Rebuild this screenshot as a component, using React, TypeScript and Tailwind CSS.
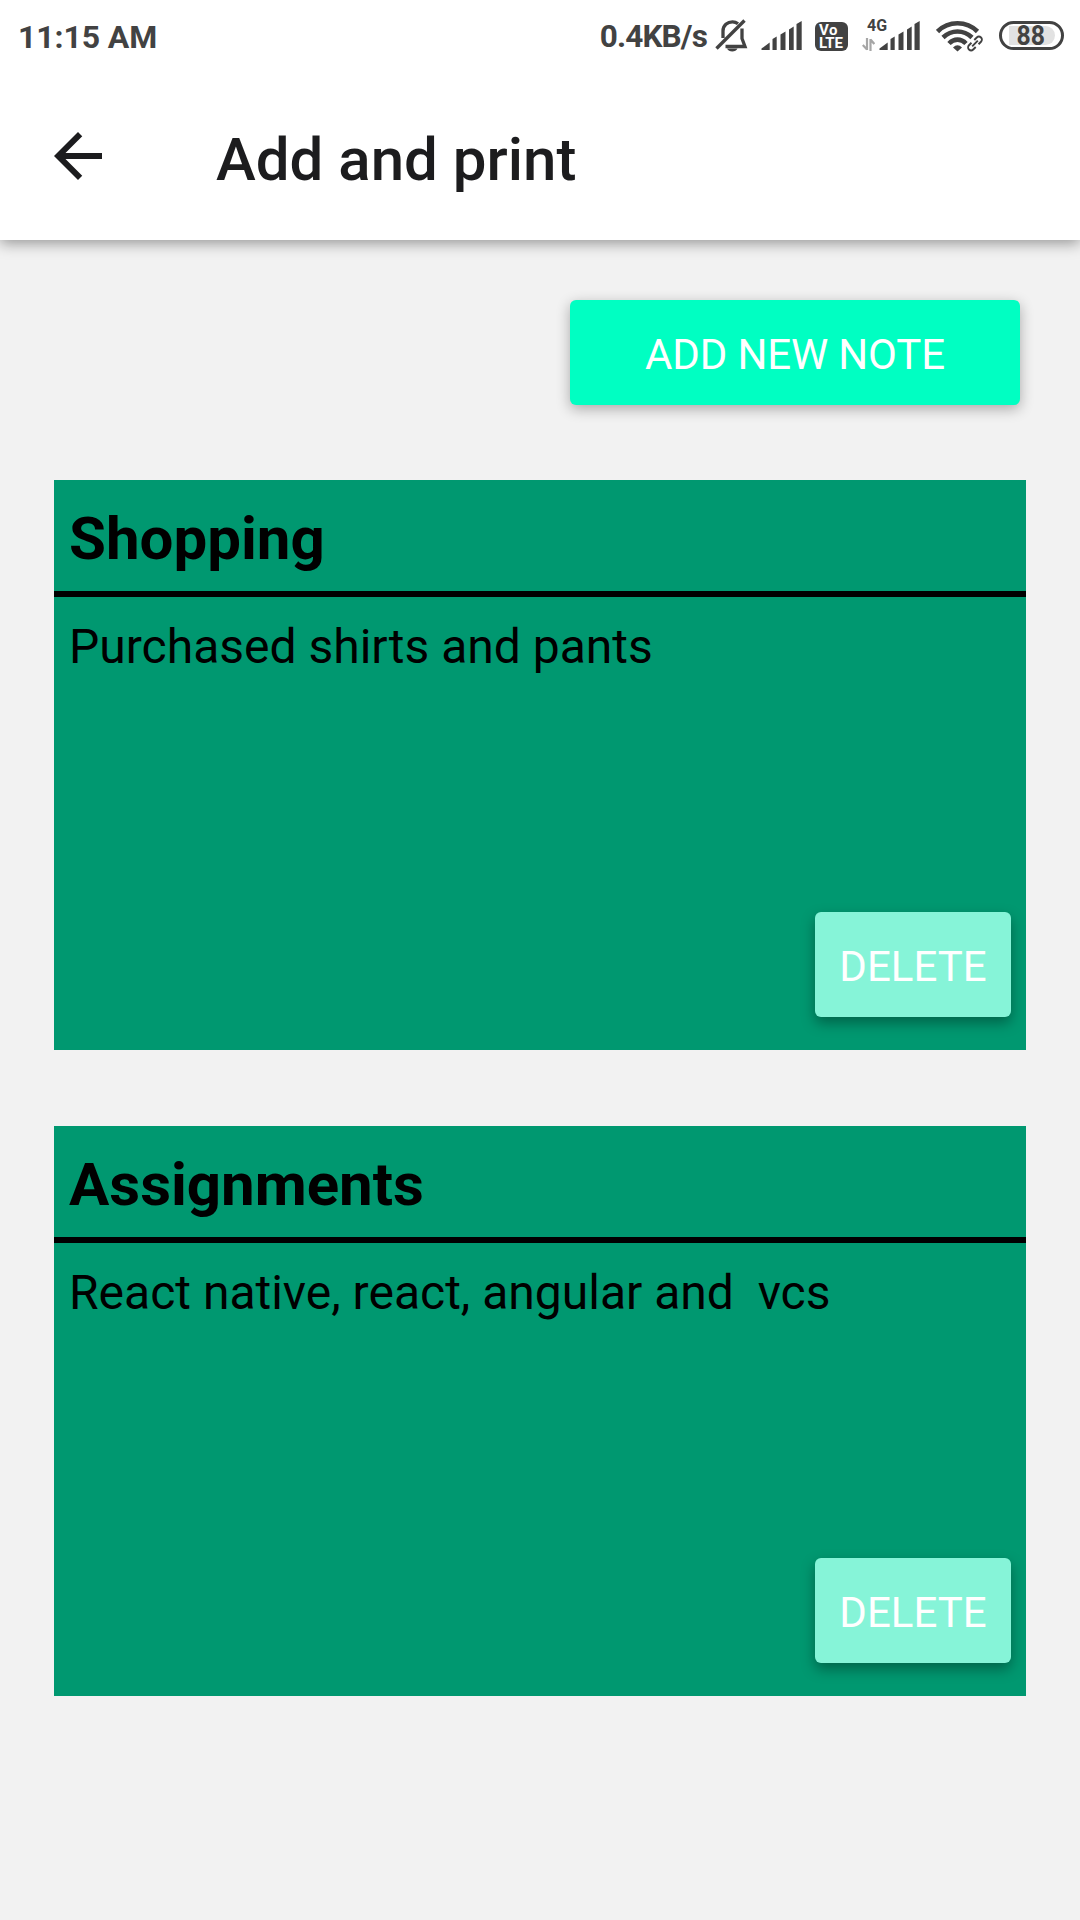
const ink = "#424242";

function SignalBars() {
  return (
    <svg width="41" height="30" viewBox="0 0 41 30" fill={ink}>
      <path d="M0.5 29V27.5L8.7 21.5V29Z" />
      <path d="M11.500 29V18L15.700 15.500V29Z" />
      <path d="M19.500 29V13.500L24.500 10.500V29Z" />
      <path d="M28 29V8.500L32.700 5.500V29Z" />
      <path d="M35.500 29V3L40.700 0V29Z" />
    </svg>
  );
}

function StatusBar() {
  return (
    <div className="flex h-[72px] items-start justify-between pr-4 pl-[18px] text-[#424242]">
      <span className="mt-[18px] text-[32px] leading-[38px] font-bold tracking-[-0.1px]">11:15 AM</span>
      <div className="flex items-start">
        <span className="mt-[18px] mr-[8px] text-[31.5px] leading-[37px] font-bold tracking-[-0.85px]">0.4KB/s</span>
        <svg className="mt-[18px] mr-[13px]" width="33" height="36" viewBox="0 0 33 36" fill="none" stroke={ink}>
          <path d="M1.500 30.500L29.500 2.500" strokeWidth="3.300" />
          <path d="M8 20V13C8 7.500 12.500 3.800 17.500 3.800C19.500 3.800 21.500 4.500 23 5.700" strokeWidth="3.300" />
          <path d="M27 10.500V20.500L30 28.500H10.500" strokeWidth="3.300" />
          <path d="M12 30.500H22.500C21 34.500 13.500 34.500 12 30.500Z" fill={ink} stroke="none" />
        </svg>
        <div className="mt-[21px] mr-[13px]"><SignalBars /></div>
        <div className="mt-[22px] mr-[14px] flex h-[29px] w-[33px] flex-col items-start justify-center rounded-[6px] bg-[#424242] pl-[4px] text-[15px] leading-[13px] font-bold text-white">
          <span className="tracking-[0.6px]">Vo</span>
          <span className="tracking-[-0.1px]">LTE</span>
        </div>
        <div className="relative mt-[21px] mr-[16px] pl-[17px]">
          <SignalBars />
          <span className="absolute top-[-5px] left-[5px] text-[16px] leading-[19px] font-bold">4G</span>
          <svg className="absolute top-[17px] left-0" width="13" height="13" viewBox="0 0 13 13" fill="none" stroke="#a6a6a6" strokeWidth="2.200">
            <path d="M5 0V12M5 11.500L0.800 7M8.500 13V1M8.500 1.500L12.300 6" />
          </svg>
        </div>
        <svg className="mt-[20px] mr-[16px]" width="47" height="32" viewBox="0 0 47 32" fill="none" stroke={ink} strokeWidth="4.600">
          <path d="M1.500 11.500C12.500 0.500 30.500 0.500 41.500 11.500" />
          <path d="M7 17.500C15.500 9.500 27.500 9.500 36 17.500" />
          <path d="M13 23.500C18 18.300 25 18.300 30 23.500" />
          <path d="M17 27.500Q21.500 23 26 27.500L21.500 31.500Z" fill={ink} stroke="none" />
          <g transform="translate(39 23.500) rotate(-45)">
            <rect x="-10.500" y="-5.500" width="21" height="11" rx="5.500" fill="#fff" stroke="none" />
            <path d="M-2 3H-5.500A3 3 0 0 1 -5.500 -3H-2M2 -3H5.500A3 3 0 0 1 5.500 3H2M-4 0H4" strokeWidth="1.900" />
          </g>
        </svg>
        <div className="mt-[21px] flex h-[29px] w-[65px] items-center justify-center rounded-full border-[3px] border-[#424242]">
          <div className="flex h-[19px] w-[46px] items-center justify-center rounded-l-[2px] rounded-r-full bg-[#e2e2e2]">
            <span className="-ml-[1px] scale-x-90 text-[27.5px] leading-[19px] font-bold">88</span>
          </div>
        </div>
      </div>
    </div>
  );
}

function Note({ title, body }: { title: string; body: string }) {
  return (
    <section className="flex h-[570px] flex-col bg-[#009870] text-black">
      <h2 className="h-[117px] border-b-[6px] border-black pt-[6px] pl-[15px] text-[60px] leading-[105px] font-bold">{title}</h2>
      <p className="pt-5 pl-[15px] text-[48px] leading-[60px] whitespace-pre">{body}</p>
      <button className="mt-auto mr-[15px] mb-[33px] h-[105px] w-[196px] self-end rounded-[6px] bg-[#86f4d8] pt-[4px] text-[42px] leading-[50px] text-white shadow-[0_6px_14px_rgba(0,0,0,0.35)]">
        DELETE
      </button>
    </section>
  );
}

export default function App() {
  return (
    <div className="min-h-[1920px] w-[1080px] bg-[#f2f2f2] font-['Roboto',sans-serif]">
      <header className="h-[240px] bg-white shadow-[0_3px_14px_rgba(0,0,0,0.4)]">
        <StatusBar />
        <div className="flex h-[168px] items-center pl-[42px]">
          <svg width="72" height="72" viewBox="0 0 24 24" fill="#1c1c1e">
            <path d="M20 11H7.830l5.590-5.590L12 4l-8 8 8 8 1.410-1.410L7.830 13H20v-2z" />
          </svg>
          <h1 className="mt-2 ml-[102px] text-[60px] leading-[70px] font-medium text-[#1c1c1e]">Add and print</h1>
        </div>
      </header>
      <main className="flex flex-col px-[54px] pt-[60px]">
        <button className="mr-[6px] h-[105px] w-[450px] self-end rounded-[6px] bg-[#00ffc2] pt-[4px] text-[42px] leading-[50px] tracking-[-0.15px] text-white shadow-[0_4px_14px_rgba(0,0,0,0.3)]">
          ADD NEW NOTE
        </button>
        <div className="mt-[75px] flex flex-col gap-[76px]">
          <Note title="Shopping" body="Purchased shirts and pants" />
          <Note title="Assignments" body="React native, react, angular and  vcs" />
        </div>
      </main>
    </div>
  );
}
